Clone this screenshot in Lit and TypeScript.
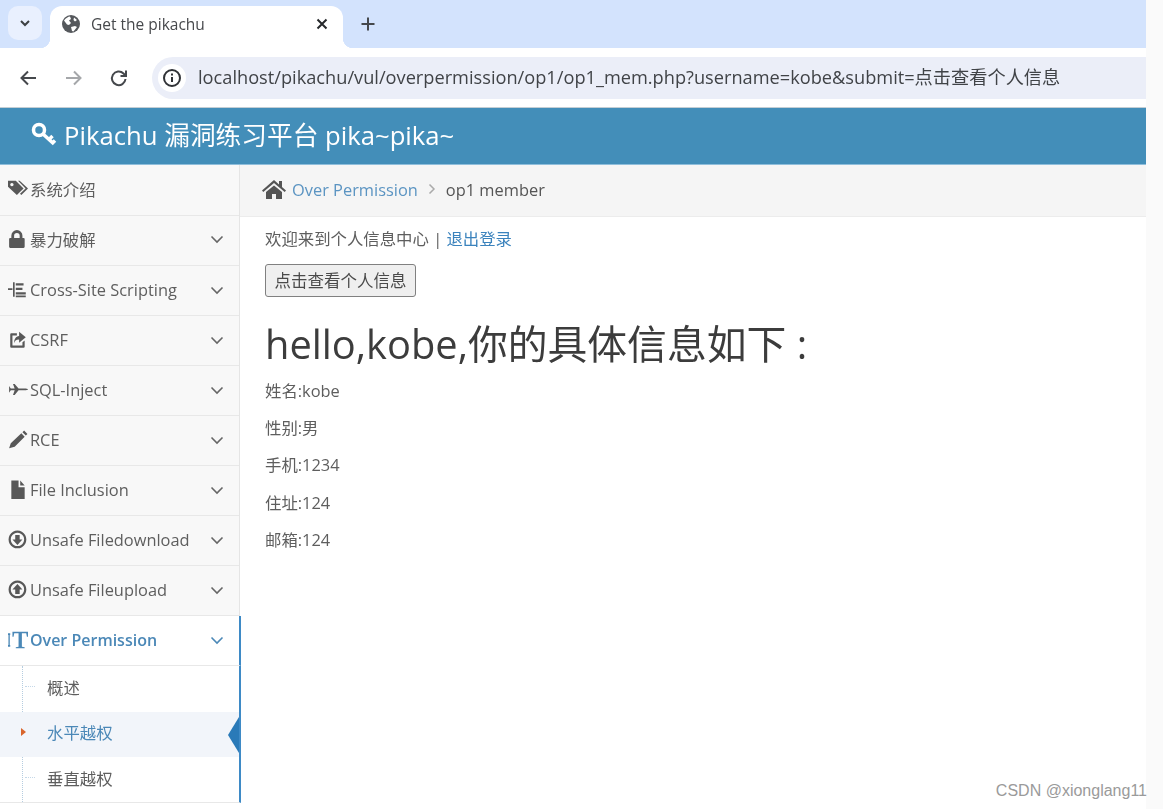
import { LitElement, html, css, svg } from 'lit';
import { customElement } from 'lit/decorators.js';

const icons: Record<string, unknown> = {
  tags: svg`<path d="M0 1.500h7l7 7-6 6-8-7.500z M3.500 3.500a1.500 1.500 0 1 0 .01 0z" fill-rule="evenodd"/><path d="M9 1.500h1.500l7.500 7-6 6-1.200-1.200 5-4.800z"/>`,
  lock: svg`<path d="M2 8h1V6a5 5 0 0 1 10 0v2h1a1 1 0 0 1 1 1v7a1 1 0 0 1-1 1H2a1 1 0 0 1-1-1V9a1 1 0 0 1 1-1zm3.500 0h5V6a2.500 2.500 0 0 0-5 0z"/>`,
  tree: svg`<path d="M0 7.500h4V9H0zM4.500 2H6v13H4.500zM7 3h7v2H7zM7 7h6v2H7zM7 11h9v2H7zM7 14h9v1.500H7z"/>`,
  share: svg`<path d="M10 1.500l6 5-6 5v-3C7 8.500 6 10 5.500 12c0-4 1.500-6 4.500-6.500zM3 3h5v2H4v9h9v-3l2-1.500V15a1 1 0 0 1-1 1H3a1 1 0 0 1-1-1V4a1 1 0 0 1 1-1z"/>`,
  plane: svg`<path d="M1 5.500l1.500 2.200H6L4.500 3.500h1.500l3.500 4.200h5c2 0 3.500.4 3.500.8s-1.500.8-3.500.8h-5L6 13.500H4.500L6 9.300H2.500L1 11.500z"/>`,
  pencil: svg`<path d="M12 3l3 3-9 9-5 1.500L2.500 12zM13 2l1.500-1.500 3 3L16 5z"/>`,
  file: svg`<path d="M3 .5h6.500v6h5.500v10.500H3zM11 .5l4 4.500h-4z"/>`,
  down: svg`<path fill-rule="evenodd" d="M8.500 .5a8 8 0 1 0 .01 0zm0 2a6 6 0 1 1-.01 0zM6.500 4.500h4v4H13l-4.500 5-4.500-5h2.500z"/>`,
  up: svg`<path fill-rule="evenodd" d="M8.500 .5a8 8 0 1 0 .01 0zm0 2a6 6 0 1 1-.01 0zM8.500 3.500l4.500 5h-2.500v4h-4v-4H4z"/>`,
  text: svg`<path d="M0 3h2v1.500h-.4v9H2V15H0v-1.500h.4v-9H0zM4 1.500h14v4.500h-1l-.6-3H12.500v12l2.500.5v1H7v-1l2.500-.5V3H5.600L5 6H4z"/>`,
};

interface Item {
  label: string;
  icon: string;
  arrow?: boolean;
  active?: boolean;
  cjk?: boolean;
}

const items: Item[] = [
  { label: '系统介绍', icon: 'tags', cjk: true },
  { label: '暴力破解', icon: 'lock', arrow: true, cjk: true },
  { label: 'Cross-Site Scripting', icon: 'tree', arrow: true },
  { label: 'CSRF', icon: 'share', arrow: true },
  { label: 'SQL-Inject', icon: 'plane', arrow: true },
  { label: 'RCE', icon: 'pencil', arrow: true },
  { label: 'File Inclusion', icon: 'file', arrow: true },
  { label: 'Unsafe Filedownload', icon: 'down', arrow: true },
  { label: 'Unsafe Fileupload', icon: 'up', arrow: true },
  { label: 'Over Permission', icon: 'text', arrow: true, active: true },
];

const details = ['姓名:kobe', '性别:男', '手机:1234', '住址:124', '邮箱:124'];

@customElement('app-root')
export class AppRoot extends LitElement {
  static styles = css`
    :host {
      display: block;
      position: relative;
      width: 1163px;
      height: 809px;
      overflow: hidden;
      background: #fafafa;
      font-family: 'Open Sans', 'Noto Sans CJK SC', sans-serif;
      font-size: 16.4px;
      color: #5e5e5e;
    }
    .page {
      width: 1146px;
      height: 809px;
      background: #fff;
      display: flex;
      flex-direction: column;
      filter: blur(0.35px);
    }
    .tabs {
      height: 48px;
      flex: none;
      background: #d3e3fd;
      display: flex;
      align-items: flex-start;
      padding: 6px 0 0 8px;
      box-sizing: border-box;
    }
    .tab-menu {
      width: 34px;
      height: 34px;
      background: #e9f0fe;
      border-radius: 10px;
      display: flex;
      align-items: center;
      justify-content: center;
    }
    .tab {
      position: relative;
      width: 293px;
      height: 42px;
      margin-left: 8px;
      background: #fff;
      border-radius: 12px 12px 0 0;
      display: flex;
      align-items: center;
      box-sizing: border-box;
      padding: 0 14px 6px 12px;
      color: #47494c;
      font-size: 15.5px;
    }
    .tab::before,
    .tab::after {
      content: '';
      position: absolute;
      bottom: 0;
      width: 10px;
      height: 10px;
    }
    .tab::before {
      left: -10px;
      background: radial-gradient(circle at 0 0, #d3e3fd 10px, #fff 10.5px);
    }
    .tab::after {
      right: -10px;
      background: radial-gradient(circle at 100% 0, #d3e3fd 10px, #fff 10.5px);
    }
    .tab-title {
      flex: 1;
      margin-left: 11px;
    }
    .new-tab {
      margin: 10px 0 0 17px;
      display: flex;
    }
    .toolbar {
      height: 59px;
      flex: none;
      background: #fff;
      border-radius: 12px 0 0 0;
      display: flex;
      align-items: center;
      padding-left: 18px;
      box-sizing: border-box;
    }
    .nav {
      display: flex;
      gap: 25.5px;
      margin-right: 23px;
    }
    .address {
      flex: 1;
      height: 42px;
      background: #ebeef8;
      border-radius: 21px 0 0 21px;
      display: flex;
      align-items: center;
      padding-left: 6px;
      color: #404347;
      font-size: 18.22px;
      white-space: nowrap;
    }
    .address span {
      padding-bottom: 3px;
    }
    .info {
      width: 28px;
      height: 28px;
      border-radius: 50%;
      background: #fff;
      display: flex;
      align-items: center;
      justify-content: center;
      margin-right: 12px;
    }
    .brand {
      height: 58px;
      flex: none;
      background: #438eb9;
      border-top: 1px solid #c4ced4;
      border-bottom: 1px solid #8fbedb;
      box-sizing: border-box;
      display: flex;
      align-items: center;
      padding: 0 0 5px 31px;
      gap: 7px;
      color: #fff;
      font-size: 25.7px;
    }
    .body {
      flex: 1;
      display: flex;
      min-height: 0;
    }
    .sidebar {
      width: 240px;
      flex: none;
      background: #f8f8f8;
      border-right: 1px solid #e5e5e5;
      box-sizing: border-box;
      height: 638px;
    }
    .row {
      height: 50px;
      display: flex;
      align-items: center;
      box-sizing: border-box;
      border-bottom: 1px solid #e8e8e8;
      padding: 0 15px 2px 8px;
    }
    .row:first-child {
      height: 51px;
    }
    .row.cjk {
      padding-bottom: 3px;
    }
    .row svg.ic {
      width: 20px;
      height: 20px;
      fill: #585858;
      flex: none;
      margin: 0 2px 0 0;
    }
    .row .label {
      flex: 1;
      white-space: nowrap;
    }
    .row.active {
      background: #fff;
      color: #4b88b7;
      font-weight: 600;
      font-size: 16px;
      border-right: 2px solid #3e8ac6;
      width: 241px;
    }
    .row.active svg.ic {
      fill: #4b88b7;
    }
    .sub {
      position: relative;
      background: #fff;
      width: 241px;
      border-right: 2px solid #3e8ac6;
      border-bottom: 1px solid #e8e8e8;
      box-sizing: border-box;
      height: 137px;
    }
    .sub::before {
      content: '';
      position: absolute;
      left: 22px;
      top: 0;
      bottom: 0;
      border-left: 1px dotted #b5cde0;
    }
    .sub-row {
      position: relative;
      height: 45.5px;
      display: flex;
      align-items: center;
      padding: 0 0 4px 47px;
      box-sizing: border-box;
    }
    .sub-row::before {
      content: '';
      position: absolute;
      left: 25px;
      width: 10px;
      border-top: 1px dotted #c5d8e8;
    }
    .sub-row.current {
      background: #f2f5fa;
      color: #4b88b7;
    }
    .sub-row.current::before {
      left: 21px;
      width: 0;
      border: 0;
      border-left: 5px solid #d9652c;
      border-top: 4px solid transparent;
      border-bottom: 4px solid transparent;
    }
    .sub-row.current::after {
      content: '';
      position: absolute;
      right: 0;
      top: 5px;
      border-right: 11px solid #2a7ab8;
      border-top: 18px solid transparent;
      border-bottom: 18px solid transparent;
    }
    .main {
      flex: 1;
      min-width: 0;
    }
    .crumbs {
      height: 52px;
      background: #f5f5f5;
      border-bottom: 1px solid #ececec;
      box-sizing: border-box;
      display: flex;
      align-items: center;
      padding: 0 0 3px 22px;
      color: #555;
    }
    .crumbs a {
      color: #5b94c2;
      margin-left: 6px;
    }
    .crumbs .sep {
      margin: 0 10px;
      display: flex;
    }
    .content {
      padding: 10px 0 0 25px;
    }
    .welcome {
      line-height: 24px;
    }
    .welcome a {
      color: #3b83bd;
    }
    .btn {
      display: block;
      margin-top: 13px;
      width: 151px;
      height: 33px;
      box-sizing: border-box;
      padding: 0 0 2px;
      background: #efefef;
      border: 1px solid #808080;
      border-radius: 3px;
      font: inherit;
      font-size: 16.5px;
      color: #4a4a4a;
    }
    h1 {
      margin: 19px 0 7px;
      font-size: 39.8px;
      font-weight: 400;
      line-height: 56px;
      color: #3c3c3c;
      white-space: nowrap;
    }
    p {
      margin: 0;
      height: 37.2px;
      line-height: 24px;
    }
    .mark {
      position: absolute;
      right: 16px;
      bottom: 9px;
      font-family: 'Liberation Sans', sans-serif;
      font-size: 16px;
      color: #9a9a9a;
    }
  `;

  render() {
    return html`
      <div class="page">
        <div class="tabs">
          <div class="tab-menu">
            <svg width="14" height="14" viewBox="0 0 14 14" fill="none" stroke="#3c4043" stroke-width="2"><path d="M3 5l4 4 4-4"/></svg>
          </div>
          <div class="tab">
            <svg width="18" height="18" viewBox="0 0 18 18">
              <circle cx="9" cy="9" r="9" fill="#55585c"/>
              <path d="M2 5.500c2-2.500 4-3.800 6-4l1 2.500-2 1.500 2 2.500-2 2-2-.5zM9 12l4-1 2 1-3.500 4.500-1.500-.5zM12 2.500l3 2.500-2 1.500-1.500-1.500z" fill="#fff"/>
            </svg>
            <span class="tab-title">Get the pikachu</span>
            <svg width="14" height="14" viewBox="0 0 14 14" stroke="#26282b" stroke-width="2"><path d="M2.500 2.500l9 9M11.500 2.500l-9 9"/></svg>
          </div>
          <div class="new-tab">
            <svg width="16" height="16" viewBox="0 0 16 16" stroke="#45484c" stroke-width="2"><path d="M8 1.500v13M1.500 8h13"/></svg>
          </div>
        </div>
        <div class="toolbar">
          <div class="nav">
            <svg width="20" height="20" viewBox="0 0 20 20" fill="none" stroke="#45484c" stroke-width="2"><path d="M18 10H4M10 3.500L3.500 10l6.500 6.500"/></svg>
            <svg width="20" height="20" viewBox="0 0 20 20" fill="none" stroke="#a5a7aa" stroke-width="2"><path d="M2 10h14M10 3.500l6.500 6.500-6.500 6.500"/></svg>
            <svg width="20" height="20" viewBox="0 0 20 20" fill="none" stroke="#45484c" stroke-width="2"><path d="M16.500 11a6.800 6.800 0 1 1-2-5.500L17 8M17 2.500V8h-5.500"/></svg>
          </div>
          <div class="address">
            <div class="info">
              <svg width="20" height="20" viewBox="0 0 20 20" fill="none" stroke="#303236" stroke-width="2"><circle cx="10" cy="10" r="8"/><path d="M10 9v5M10 5.500v2"/></svg>
            </div>
            <span>localhost/pikachu/vul/overpermission/op1/op1_mem.php?username=kobe&submit=点击查看个人信息</span>
          </div>
        </div>
        <div class="brand">
          <svg width="26" height="24" viewBox="0 0 26 24" fill="none" stroke="#fff" stroke-width="3.500">
            <circle cx="8" cy="8" r="5.500"/>
            <path d="M12 12l11 10M18 17.500l3.500-3.500M21.500 21l2.500-2.500"/>
          </svg>
          <span>Pikachu 漏洞练习平台 pika~pika~</span>
        </div>
        <div class="body">
          <nav class="sidebar">
            ${items.map(
              (it) => html`
                <div class="row ${it.active ? 'active' : ''} ${it.cjk ? 'cjk' : ''}">
                  <svg class="ic" viewBox="0 0 18 18">${icons[it.icon]}</svg>
                  <span class="label">${it.label}</span>
                  ${it.arrow
                    ? html`<svg width="14" height="14" viewBox="0 0 14 14" fill="none" stroke="${it.active ? '#4b88b7' : '#666'}" stroke-width="1.600"><path d="M1.500 4.500L7 10l5.500-5.500"/></svg>`
                    : ''}
                </div>
              `
            )}
            <div class="sub">
              <div class="sub-row">概述</div>
              <div class="sub-row current">水平越权</div>
              <div class="sub-row">垂直越权</div>
            </div>
          </nav>
          <main class="main">
            <div class="crumbs">
              <svg width="24" height="20" viewBox="0 0 24 20" fill="#555"><path d="M12 1l5 4.500V2h3v6l4 3.500-1.300 1.500L12 4 1.300 13 0 11.500zM4 13l8-6.500 8 6.500v7h-6v-5h-4v5H4z"/></svg>
              <a>Over Permission</a>
              <span class="sep"><svg width="8" height="12" viewBox="0 0 8 12" fill="none" stroke="#aaa" stroke-width="1.500"><path d="M1.500 1.500L6 6l-4.500 4.500"/></svg></span>
              <span>op1 member</span>
            </div>
            <div class="content">
              <div class="welcome">欢迎来到个人信息中心 | <a>退出登录</a></div>
              <button class="btn">点击查看个人信息</button>
              <h1>hello,kobe,你的具体信息如下 :</h1>
              ${details.map((d) => html`<p>${d}</p>`)}
            </div>
          </main>
        </div>
      </div>
      <div class="mark">CSDN @xionglang11</div>
    `;
  }
}
